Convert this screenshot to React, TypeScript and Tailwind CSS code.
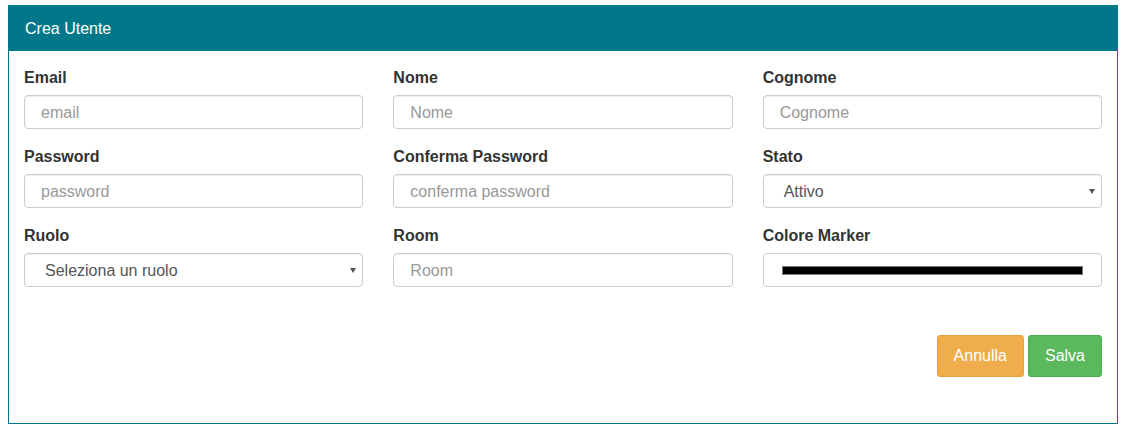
import React from 'react';

const FONT = { fontFamily: '"Liberation Sans", Arial, sans-serif' };

const inputCls =
  'block w-full h-[34px] rounded-[4px] border border-[#cccccc] bg-white pl-4 pr-3 pt-[2px] text-[16px] text-[#555555] placeholder:text-[#999999] shadow-[inset_0_1px_1px_rgba(0,0,0,0.075)] outline-none';

const Label: React.FC<{ children: React.ReactNode }> = ({ children }) => (
  <label className="block text-[16px] font-bold leading-[22px] text-[#333333] mb-[6px]">{children}</label>
);

const TextField: React.FC<{ label: string; placeholder: string; type?: string }> = ({ label, placeholder, type = 'text' }) => (
  <div className="mb-[17px]">
    <Label>{label}</Label>
    <input type={type} placeholder={placeholder} className={inputCls} />
  </div>
);

const SelectField: React.FC<{ label: string; value: string }> = ({ label, value }) => (
  <div className="mb-[17px]">
    <Label>{label}</Label>
    <div className="relative">
      <div className="flex items-center h-[34px] rounded-[4px] border border-[#cccccc] bg-white pl-5 pt-[2px] text-[16px] text-[#555555] shadow-[inset_0_1px_1px_rgba(0,0,0,0.075)]">
        {value}
      </div>
      <svg className="absolute right-[7px] top-[15px]" width="6" height="5" viewBox="0 0 6 5">
        <path d="M0 0 L6 0 L3 5 Z" fill="#555555" />
      </svg>
    </div>
  </div>
);

const ColorField: React.FC<{ label: string }> = ({ label }) => (
  <div className="mb-[17px]">
    <Label>{label}</Label>
    <div className="flex items-center h-[34px] rounded-[4px] border border-[#cccccc] bg-white pl-[18px] pr-[18px]">
      <div className="h-[9px] w-full bg-black border border-[#777777]" />
    </div>
  </div>
);

export default function App() {
  return (
    <div className="min-h-[433px] bg-white px-2 pt-[5px]" style={FONT}>
      <div className="border border-[#01788a] bg-white">
        <div className="h-[45px] bg-[#01788a] flex items-center pl-4 text-[16px] text-white">Crea Utente</div>
        <div className="px-[15px] pt-4 pb-[46px]">
          <div className="grid grid-cols-3 gap-x-[30px]">
            <TextField label="Email" placeholder="email" />
            <TextField label="Nome" placeholder="Nome" />
            <TextField label="Cognome" placeholder="Cognome" />
            <TextField label="Password" placeholder="password" type="password" />
            <TextField label="Conferma Password" placeholder="conferma password" type="password" />
            <SelectField label="Stato" value="Attivo" />
            <SelectField label="Ruolo" value="Seleziona un ruolo" />
            <TextField label="Room" placeholder="Room" />
            <ColorField label="Colore Marker" />
          </div>
          <div className="flex justify-end gap-[4px] mt-[31px]">
            <button className="h-[42px] px-[16px] rounded-[3px] border border-[#eea236] bg-[#f0ad4e] text-[16px] text-white">
              Annulla
            </button>
            <button className="h-[42px] px-[16px] rounded-[3px] border border-[#4cae4c] bg-[#5cb85c] text-[16px] text-white">
              Salva
            </button>
          </div>
        </div>
      </div>
    </div>
  );
}
